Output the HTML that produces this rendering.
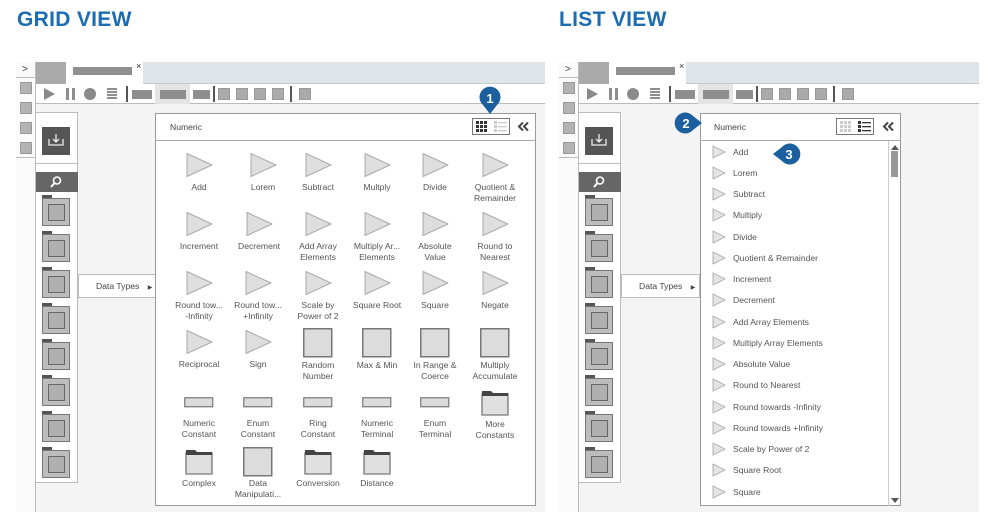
<!DOCTYPE html>
<html><head><meta charset="utf-8"><style>
*{box-sizing:border-box;margin:0;padding:0}
body{width:989px;height:526px;background:#fff;position:relative;overflow:hidden;font-family:"Liberation Sans",sans-serif;color:#555}
.a{position:absolute}
h1{position:absolute;top:8px;font-size:21px;font-weight:bold;color:#1b6cb0;letter-spacing:0.3px}
.win{position:absolute;top:0;left:0;width:560px;height:526px}
.sq12{position:absolute;width:12px;height:12px;background:#b3b3b3;border:1px solid #999}
.tb{position:absolute;background:#8e8e8e}
.tsq{position:absolute;top:88px;width:12px;height:12px;background:#aaa;border:1px solid #999}
.sep{position:absolute;top:86px;width:2px;height:16px;background:#555}
.fold{position:absolute;left:42px;width:28px;height:28px;background:#bdbdbd;border:1.5px solid #777}
.fold:before{content:"";position:absolute;left:-1px;top:-4px;width:10px;height:3px;background:#555}
.fold:after{content:"";position:absolute;left:5px;top:5px;width:15px;height:15px;background:#b0b0b0;border:1.5px solid #666}
.cell{position:absolute;width:70px;text-align:center;font-size:8.6px;line-height:10.5px;color:#555}
.cell svg{display:block;margin:0 auto 3px}
.li{position:absolute;left:712px;font-size:8.6px;color:#555;height:14px;line-height:14px}
.li svg{position:absolute;left:0;top:0}
.li span{position:absolute;left:21px;white-space:nowrap}
</style></head><body>
<h1 style="left:17px">GRID VIEW</h1>
<h1 style="left:559px">LIST VIEW</h1>

<div class="win" style="left:0">
<div class="a" style="left:16px;top:62px;width:529px;height:450px;background:#f4f4f4;border-top:1px solid #ccc"></div>
<div class="a" style="left:16px;top:62px;width:20px;height:450px;background:#fafafa;border-right:1px solid #bbb"></div>
<div class="a" style="left:22px;top:64px;font-size:10px;color:#444">&gt;</div>
<div class="a" style="left:16px;top:77px;width:20px;height:1px;background:#bbb"></div>
<div class="sq12" style="left:20px;top:82px"></div><div class="sq12" style="left:20px;top:102px"></div><div class="sq12" style="left:20px;top:122px"></div><div class="sq12" style="left:20px;top:142px"></div>
<div class="a" style="left:16px;top:157px;width:20px;height:1px;background:#bbb"></div>
<div class="a" style="left:36px;top:62px;width:30px;height:22px;background:#aaa"></div>
<div class="a" style="left:66px;top:62px;width:77px;height:23px;background:#fff"></div>
<div class="a" style="left:73px;top:67px;width:59px;height:8px;background:#909090"></div>
<div class="a" style="left:136px;top:61px;font-size:9px;color:#333">×</div>
<div class="a" style="left:143px;top:62px;width:402px;height:22px;background:#dfe4e8;border-bottom:1px solid #c6cbd0"></div>
<div class="a" style="left:36px;top:84px;width:509px;height:20px;background:#fff;border-bottom:1px solid #bbb"></div>
<svg class="a" style="left:42px;top:87px" width="14" height="14"><path d="M2 1L13 7L2 13Z" fill="#8a8a8a"/></svg>
<div class="tb" style="left:66px;top:88px;width:3px;height:12px"></div><div class="tb" style="left:72px;top:88px;width:3px;height:12px"></div>
<div class="a" style="left:84px;top:88px;width:12px;height:12px;border-radius:50%;background:#8a8a8a"></div>
<div class="tb" style="left:107px;top:88px;width:10px;height:2px"></div><div class="tb" style="left:107px;top:91px;width:10px;height:2px"></div><div class="tb" style="left:107px;top:94px;width:10px;height:2px"></div><div class="tb" style="left:107px;top:97px;width:10px;height:2px"></div>
<div class="sep" style="left:126px"></div>
<div class="tb" style="left:132px;top:90px;width:20px;height:9px"></div>
<div class="a" style="left:155px;top:84px;width:35px;height:20px;background:#e4e4e4"></div>
<div class="tb" style="left:160px;top:90px;width:26px;height:9px"></div>
<div class="tb" style="left:193px;top:90px;width:17px;height:9px"></div>
<div class="sep" style="left:213px"></div>
<div class="tsq" style="left:218px"></div><div class="tsq" style="left:236px"></div><div class="tsq" style="left:254px"></div><div class="tsq" style="left:272px"></div>
<div class="sep" style="left:290px"></div>
<div class="tsq" style="left:299px"></div>
<div class="a" style="left:36px;top:112px;width:42px;height:371px;background:#fff;border:1px solid #bbb;border-left:none"></div>
<div class="a" style="left:36px;top:163px;width:42px;height:1px;background:#bbb"></div>
<div class="a" style="left:42px;top:127px;width:28px;height:28px;background:#555"></div>
<svg class="a" style="left:47px;top:132px" width="18" height="16"><path d="M2 7V13H16V7M9 2V10M6 7L9 10L12 7" stroke="#eee" stroke-width="1.3" fill="none"/></svg>
<div class="a" style="left:36px;top:172px;width:42px;height:20px;background:#666"></div>
<svg class="a" style="left:49px;top:175px" width="14" height="14"><circle cx="8" cy="5.5" r="3.5" stroke="#fff" stroke-width="1.6" fill="none"/><path d="M5.5 8L2 12" stroke="#fff" stroke-width="2"/></svg>
<div class="fold" style="top:198px"></div><div class="fold" style="top:234px"></div><div class="fold" style="top:270px"></div><div class="fold" style="top:306px"></div><div class="fold" style="top:342px"></div><div class="fold" style="top:378px"></div><div class="fold" style="top:414px"></div><div class="fold" style="top:450px"></div>
<div class="a" style="left:78px;top:274px;width:78px;height:24px;background:#fff;border:1px solid #bbb;font-size:8.6px;line-height:22px;padding-left:17px;color:#444">Data Types <span style="font-size:6px;margin-left:6px">▶</span></div>
<div class="a" style="left:155px;top:113px;width:381px;height:393px;background:#fff;border:1px solid #999"></div>
<div class="a" style="left:155px;top:140px;width:381px;height:1px;background:#aaa"></div>
<div class="a" style="left:170px;top:122px;font-size:8.6px;color:#444">Numeric</div>
<div class="a" style="left:472px;top:118px;width:38px;height:17px;border:1px solid #777;background:#fff"></div>
<svg class="a" style="left:517px;top:121px" width="13" height="11"><path d="M6 1.5L2 5.5L6 9.5M11 1.5L7 5.5L11 9.5" stroke="#444" stroke-width="2" fill="none"/></svg>
</div>

<div class="win" style="left:543px">
<div class="a" style="left:16px;top:62px;width:420px;height:450px;background:#f4f4f4;border-top:1px solid #ccc"></div>
<div class="a" style="left:16px;top:62px;width:20px;height:450px;background:#fafafa;border-right:1px solid #bbb"></div>
<div class="a" style="left:22px;top:64px;font-size:10px;color:#444">&gt;</div>
<div class="a" style="left:16px;top:77px;width:20px;height:1px;background:#bbb"></div>
<div class="sq12" style="left:20px;top:82px"></div><div class="sq12" style="left:20px;top:102px"></div><div class="sq12" style="left:20px;top:122px"></div><div class="sq12" style="left:20px;top:142px"></div>
<div class="a" style="left:16px;top:157px;width:20px;height:1px;background:#bbb"></div>
<div class="a" style="left:36px;top:62px;width:30px;height:22px;background:#aaa"></div>
<div class="a" style="left:66px;top:62px;width:77px;height:23px;background:#fff"></div>
<div class="a" style="left:73px;top:67px;width:59px;height:8px;background:#909090"></div>
<div class="a" style="left:136px;top:61px;font-size:9px;color:#333">×</div>
<div class="a" style="left:143px;top:62px;width:293px;height:22px;background:#dfe4e8;border-bottom:1px solid #c6cbd0"></div>
<div class="a" style="left:36px;top:84px;width:400px;height:20px;background:#fff;border-bottom:1px solid #bbb"></div>
<svg class="a" style="left:42px;top:87px" width="14" height="14"><path d="M2 1L13 7L2 13Z" fill="#8a8a8a"/></svg>
<div class="tb" style="left:66px;top:88px;width:3px;height:12px"></div><div class="tb" style="left:72px;top:88px;width:3px;height:12px"></div>
<div class="a" style="left:84px;top:88px;width:12px;height:12px;border-radius:50%;background:#8a8a8a"></div>
<div class="tb" style="left:107px;top:88px;width:10px;height:2px"></div><div class="tb" style="left:107px;top:91px;width:10px;height:2px"></div><div class="tb" style="left:107px;top:94px;width:10px;height:2px"></div><div class="tb" style="left:107px;top:97px;width:10px;height:2px"></div>
<div class="sep" style="left:126px"></div>
<div class="tb" style="left:132px;top:90px;width:20px;height:9px"></div>
<div class="a" style="left:155px;top:84px;width:35px;height:20px;background:#e4e4e4"></div>
<div class="tb" style="left:160px;top:90px;width:26px;height:9px"></div>
<div class="tb" style="left:193px;top:90px;width:17px;height:9px"></div>
<div class="sep" style="left:213px"></div>
<div class="tsq" style="left:218px"></div><div class="tsq" style="left:236px"></div><div class="tsq" style="left:254px"></div><div class="tsq" style="left:272px"></div>
<div class="sep" style="left:290px"></div>
<div class="tsq" style="left:299px"></div>
<div class="a" style="left:36px;top:112px;width:42px;height:371px;background:#fff;border:1px solid #bbb;border-left:none"></div>
<div class="a" style="left:36px;top:163px;width:42px;height:1px;background:#bbb"></div>
<div class="a" style="left:42px;top:127px;width:28px;height:28px;background:#555"></div>
<svg class="a" style="left:47px;top:132px" width="18" height="16"><path d="M2 7V13H16V7M9 2V10M6 7L9 10L12 7" stroke="#eee" stroke-width="1.3" fill="none"/></svg>
<div class="a" style="left:36px;top:172px;width:42px;height:20px;background:#666"></div>
<svg class="a" style="left:49px;top:175px" width="14" height="14"><circle cx="8" cy="5.5" r="3.5" stroke="#fff" stroke-width="1.6" fill="none"/><path d="M5.5 8L2 12" stroke="#fff" stroke-width="2"/></svg>
<div class="fold" style="top:198px"></div><div class="fold" style="top:234px"></div><div class="fold" style="top:270px"></div><div class="fold" style="top:306px"></div><div class="fold" style="top:342px"></div><div class="fold" style="top:378px"></div><div class="fold" style="top:414px"></div><div class="fold" style="top:450px"></div>
<div class="a" style="left:78px;top:274px;width:79px;height:24px;background:#fff;border:1px solid #bbb;font-size:8.6px;line-height:22px;padding-left:17px;color:#444">Data Types <span style="font-size:6px;margin-left:6px">▶</span></div>
<div class="a" style="left:157px;top:113px;width:201px;height:393px;background:#fff;border:1px solid #999"></div>
<div class="a" style="left:157px;top:140px;width:201px;height:1px;background:#aaa"></div>
<div class="a" style="left:171px;top:122px;font-size:8.6px;color:#444">Numeric</div>
<div class="a" style="left:293px;top:118px;width:38px;height:17px;border:1px solid #777;background:#fff"></div>
<svg class="a" style="left:339px;top:121px" width="13" height="11"><path d="M6 1.5L2 5.5L6 9.5M11 1.5L7 5.5L11 9.5" stroke="#444" stroke-width="2" fill="none"/></svg>
<div class="a" style="left:345px;top:141px;width:1px;height:365px;background:#ccc"></div>
<svg class="a" style="left:347px;top:143px" width="10" height="8"><path d="M1 7L5 2L9 7Z" fill="#555"/></svg>
<div class="a" style="left:348px;top:151px;width:7px;height:26px;background:#999"></div>
<svg class="a" style="left:347px;top:497px" width="10" height="8"><path d="M1 1L5 6L9 1Z" fill="#555"/></svg>
</div>

<svg class="a" style="left:476px;top:121px" width="12" height="11"><g fill="#333"><rect x="0" y="0" width="3" height="3"/><rect x="4" y="0" width="3" height="3"/><rect x="8" y="0" width="3" height="3"/><rect x="0" y="4" width="3" height="3"/><rect x="4" y="4" width="3" height="3"/><rect x="8" y="4" width="3" height="3"/><rect x="0" y="8" width="3" height="3"/><rect x="4" y="8" width="3" height="3"/><rect x="8" y="8" width="3" height="3"/></g></svg>
<svg class="a" style="left:494px;top:121px" width="13" height="11"><g fill="#ccc"><rect x="0" y="0" width="3" height="3"/><rect x="0" y="4" width="3" height="3"/><rect x="0" y="8" width="3" height="3"/><rect x="4" y="1" width="9" height="1.3"/><rect x="4" y="5" width="9" height="1.3"/><rect x="4" y="9" width="9" height="1.3"/></g></svg>
<svg class="a" style="left:840px;top:121px" width="12" height="11"><g fill="#ccc"><rect x="0" y="0" width="3" height="3"/><rect x="4" y="0" width="3" height="3"/><rect x="8" y="0" width="3" height="3"/><rect x="0" y="4" width="3" height="3"/><rect x="4" y="4" width="3" height="3"/><rect x="8" y="4" width="3" height="3"/><rect x="0" y="8" width="3" height="3"/><rect x="4" y="8" width="3" height="3"/><rect x="8" y="8" width="3" height="3"/></g></svg>
<svg class="a" style="left:858px;top:121px" width="13" height="11"><g fill="#333"><rect x="0" y="0" width="3" height="3"/><rect x="0" y="4" width="3" height="3"/><rect x="0" y="8" width="3" height="3"/><rect x="4" y="1" width="9" height="1.3"/><rect x="4" y="5" width="9" height="1.3"/><rect x="4" y="9" width="9" height="1.3"/></g></svg>

<svg width="0" height="0" style="position:absolute"><defs>
<g id="t"><path d="M2 1.5L27 13L2 24.5Z" fill="#dedede" stroke="#aaa" stroke-width="1" stroke-linejoin="round"/></g>
<g id="s"><rect x="0.75" y="0.75" width="28" height="28" fill="#dcdcdc" stroke="#777" stroke-width="1.5"/></g>
<g id="b"><rect x="0.75" y="0.75" width="28" height="9" fill="#dcdcdc" stroke="#777" stroke-width="1.2"/></g>
<g id="f"><path d="M1 4H27V25H1Z" fill="#e0e0e0" stroke="#777" stroke-width="1.3"/><path d="M1 1H10L12 3H27V6H1Z" fill="#444"/></g>
</defs></svg>

<div class="cell" style="left:164px;top:152px"><svg width="28" height="27"><use href="#t"/></svg>Add</div>
<div class="cell" style="left:228px;top:152px"><svg width="28" height="27"><use href="#t"/></svg>Lorem</div>
<div class="cell" style="left:283px;top:152px"><svg width="28" height="27"><use href="#t"/></svg>Subtract</div>
<div class="cell" style="left:342px;top:152px"><svg width="28" height="27"><use href="#t"/></svg>Multply</div>
<div class="cell" style="left:400px;top:152px"><svg width="28" height="27"><use href="#t"/></svg>Divide</div>
<div class="cell" style="left:460px;top:152px"><svg width="28" height="27"><use href="#t"/></svg>Quotient &amp;<br>Remainder</div>

<div class="cell" style="left:164px;top:211px"><svg width="28" height="27"><use href="#t"/></svg>Increment</div>
<div class="cell" style="left:224px;top:211px"><svg width="28" height="27"><use href="#t"/></svg>Decrement</div>
<div class="cell" style="left:283px;top:211px"><svg width="28" height="27"><use href="#t"/></svg>Add Array<br>Elements</div>
<div class="cell" style="left:342px;top:211px"><svg width="28" height="27"><use href="#t"/></svg>Multiply Ar...<br>Elements</div>
<div class="cell" style="left:400px;top:211px"><svg width="28" height="27"><use href="#t"/></svg>Absolute<br>Value</div>
<div class="cell" style="left:460px;top:211px"><svg width="28" height="27"><use href="#t"/></svg>Round to<br>Nearest</div>

<div class="cell" style="left:164px;top:270px"><svg width="28" height="27"><use href="#t"/></svg>Round tow...<br>-Infinity</div>
<div class="cell" style="left:223px;top:270px"><svg width="28" height="27"><use href="#t"/></svg>Round tow...<br>+Infinity</div>
<div class="cell" style="left:283px;top:270px"><svg width="28" height="27"><use href="#t"/></svg>Scale by<br>Power of 2</div>
<div class="cell" style="left:342px;top:270px"><svg width="28" height="27"><use href="#t"/></svg>Square Root</div>
<div class="cell" style="left:400px;top:270px"><svg width="28" height="27"><use href="#t"/></svg>Square</div>
<div class="cell" style="left:460px;top:270px"><svg width="28" height="27"><use href="#t"/></svg>Negate</div>

<div class="cell" style="left:164px;top:329px"><svg width="28" height="27"><use href="#t"/></svg>Reciprocal</div>
<div class="cell" style="left:223px;top:329px"><svg width="28" height="27"><use href="#t"/></svg>Sign</div>
<div class="cell" style="left:283px;top:328px"><svg width="30" height="30" style="margin-bottom:2px"><use href="#s"/></svg>Random<br>Number</div>
<div class="cell" style="left:342px;top:328px"><svg width="30" height="30" style="margin-bottom:2px"><use href="#s"/></svg>Max &amp; Min</div>
<div class="cell" style="left:400px;top:328px"><svg width="30" height="30" style="margin-bottom:2px"><use href="#s"/></svg>In Range &amp;<br>Coerce</div>
<div class="cell" style="left:460px;top:328px"><svg width="30" height="30" style="margin-bottom:2px"><use href="#s"/></svg>Multiply<br>Accumulate</div>

<div class="cell" style="left:164px;top:397px"><svg width="30" height="11" style="margin-bottom:10px"><use href="#b"/></svg>Numeric<br>Constant</div>
<div class="cell" style="left:223px;top:397px"><svg width="30" height="11" style="margin-bottom:10px"><use href="#b"/></svg>Enum<br>Constant</div>
<div class="cell" style="left:283px;top:397px"><svg width="30" height="11" style="margin-bottom:10px"><use href="#b"/></svg>Ring<br>Constant</div>
<div class="cell" style="left:342px;top:397px"><svg width="30" height="11" style="margin-bottom:10px"><use href="#b"/></svg>Numeric<br>Terminal</div>
<div class="cell" style="left:400px;top:397px"><svg width="30" height="11" style="margin-bottom:10px"><use href="#b"/></svg>Enum<br>Terminal</div>
<div class="cell" style="left:460px;top:390px"><svg width="28" height="26" style="margin-bottom:3px"><use href="#f"/></svg>More<br>Constants</div>

<div class="cell" style="left:164px;top:449px"><svg width="28" height="26" style="margin-bottom:3px"><use href="#f"/></svg>Complex</div>
<div class="cell" style="left:223px;top:447px"><svg width="30" height="30" style="margin-bottom:1px"><use href="#s"/></svg>Data<br>Manipulati...</div>
<div class="cell" style="left:283px;top:449px"><svg width="28" height="26" style="margin-bottom:3px"><use href="#f"/></svg>Conversion</div>
<div class="cell" style="left:342px;top:449px"><svg width="28" height="26" style="margin-bottom:3px"><use href="#f"/></svg>Distance</div>

<svg width="0" height="0" style="position:absolute"><defs><g id="lt"><path d="M1 1L13 7L1 13Z" fill="#e4e4e4" stroke="#aaa" stroke-width="0.9" stroke-linejoin="round"/></g></defs></svg>
<div class="li" style="top:145px"><svg width="14" height="14"><use href="#lt"/></svg><span>Add</span></div>
<div class="li" style="top:166px"><svg width="14" height="14"><use href="#lt"/></svg><span>Lorem</span></div>
<div class="li" style="top:187px"><svg width="14" height="14"><use href="#lt"/></svg><span>Subtract</span></div>
<div class="li" style="top:208px"><svg width="14" height="14"><use href="#lt"/></svg><span>Multiply</span></div>
<div class="li" style="top:230px"><svg width="14" height="14"><use href="#lt"/></svg><span>Divide</span></div>
<div class="li" style="top:251px"><svg width="14" height="14"><use href="#lt"/></svg><span>Quotient &amp; Remainder</span></div>
<div class="li" style="top:272px"><svg width="14" height="14"><use href="#lt"/></svg><span>Increment</span></div>
<div class="li" style="top:293px"><svg width="14" height="14"><use href="#lt"/></svg><span>Decrement</span></div>
<div class="li" style="top:315px"><svg width="14" height="14"><use href="#lt"/></svg><span>Add Array Elements</span></div>
<div class="li" style="top:336px"><svg width="14" height="14"><use href="#lt"/></svg><span>Multiply Array Elements</span></div>
<div class="li" style="top:357px"><svg width="14" height="14"><use href="#lt"/></svg><span>Absolute Value</span></div>
<div class="li" style="top:378px"><svg width="14" height="14"><use href="#lt"/></svg><span>Round to Nearest</span></div>
<div class="li" style="top:400px"><svg width="14" height="14"><use href="#lt"/></svg><span>Round towards -Infinity</span></div>
<div class="li" style="top:421px"><svg width="14" height="14"><use href="#lt"/></svg><span>Round towards +Infinity</span></div>
<div class="li" style="top:442px"><svg width="14" height="14"><use href="#lt"/></svg><span>Scale by Power of 2</span></div>
<div class="li" style="top:463px"><svg width="14" height="14"><use href="#lt"/></svg><span>Square Root</span></div>
<div class="li" style="top:485px"><svg width="14" height="14"><use href="#lt"/></svg><span>Square</span></div>

<svg class="a" style="left:478px;top:86px" width="24" height="30"><path d="M12 28L5 19A10.5 10.5 0 1 1 19 19Z" fill="#1b5f9e"/><text x="12" y="17" text-anchor="middle" font-family="Liberation Sans" font-weight="bold" font-size="13" fill="#fff">1</text></svg>
<svg class="a" style="left:674px;top:111px" width="30" height="24"><path d="M28 12L19 5A10.5 10.5 0 1 0 19 19Z" fill="#1b5f9e"/><text x="12" y="17" text-anchor="middle" font-family="Liberation Sans" font-weight="bold" font-size="13" fill="#fff">2</text></svg>
<svg class="a" style="left:771px;top:142px" width="30" height="24"><path d="M2 12L11 5A10.5 10.5 0 1 1 11 19Z" fill="#1b5f9e"/><text x="18" y="17" text-anchor="middle" font-family="Liberation Sans" font-weight="bold" font-size="13" fill="#fff">3</text></svg>
</body></html>
